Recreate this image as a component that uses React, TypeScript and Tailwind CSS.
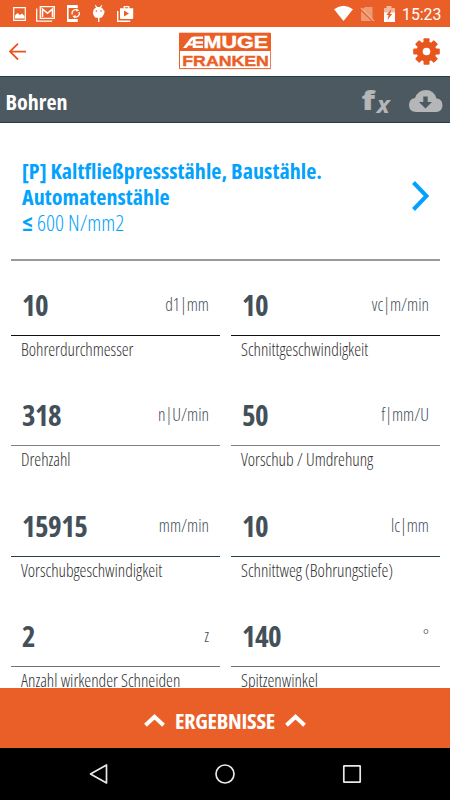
import React from "react";

const fields = [
  ["10", "d1|mm", "Bohrerdurchmesser", "border-[#101010]"],
  ["10", "vc|m/min", "Schnittgeschwindigkeit", "border-[#101010]"],
  ["318", "n|U/min", "Drehzahl", "border-[#7b8589]"],
  ["50", "f|mm/U", "Vorschub / Umdrehung", "border-[#7b8589]"],
  ["15915", "mm/min", "Vorschubgeschwindigkeit", "border-[#25404a]"],
  ["10", "lc|mm", "Schnittweg (Bohrungstiefe)", "border-[#25404a]"],
  ["2", "z", "Anzahl wirkender Schneiden", "border-[#69757a]"],
  ["140", "°", "Spitzenwinkel", "border-[#69757a]"],
];

function StatusBar() {
  return (
    <div className="flex h-[27px] shrink-0 items-center bg-[#e95f27] text-white">
      <svg width="150" height="27" viewBox="0 0 150 27" fill="none">
        <path d="M13.7 7.7h11.6v12.6H13.7z" stroke="#fff" strokeWidth="1.2" />
        <path d="M15 18.5v-3l2.5-2.5 2.5 2 2-1.5 2.5 2.5v2.5z" fill="#fff" />
        <path d="M36.7 8.5v12.6h15.5" stroke="#fff" strokeWidth="1.3" />
        <path d="M40.3 6.7h14v11.6h-14z" stroke="#fff" strokeWidth="1.3" />
        <path d="M42.5 17V9l5 4.3 5-4.3v8" stroke="#fff" strokeWidth="1.6" />
        <path d="M77 8V5.8H67.8v15.4H77V19" stroke="#fff" strokeWidth="1.6" />
        <path d="M67 5h10v3H67zM67 19h10v3H67z" fill="#fff" />
        <path d="M72.3 14.5a3.6 3.6 0 0 1 5.7-4M79 12a3.6 3.6 0 0 1-5.5 4.3" stroke="#fff" strokeWidth="1.2" />
        <path d="M76.5 8.3l2.7 2.5-3.2.8zM75 18.5l-2.5-2.6 3.3-.7z" fill="#fff" />
        <path d="M93.2 10.5Q94 8.5 96 7.6L94.8 5.3l.8-.4 1.8 2.2h2.4l1.8-2.2.8.4-1.2 2.3q2 .9 2.6 2.9h.7q.2 4.5-3.2 7.2h-5.8q-3.3-2.7-2.2-7.2z" fill="#fff" />
        <path d="M98 17h1.4v5H98z" fill="#fff" />
        <circle cx="96.4" cy="11" r=".8" fill="#e95f27" />
        <circle cx="101" cy="11" r=".8" fill="#e95f27" />
        <path d="M117.7 11v10.2h12.6" stroke="#fff" strokeWidth="1.4" />
        <path fillRule="evenodd" d="M120 8.3h3.5V7q0-1 1-1h4q1 0 1 1v1.3h3.7V18q0 1-1 1H121q-1 0-1-1zM124.8 8.3h3.4V7.2h-3.4zM124 10.5v6l5-3z" fill="#fff" />
      </svg>
      <svg className="ml-auto" width="66" height="27" viewBox="334 0 66 27" fill="none">
        <path d="M334 9.2q9.5-7 19 0L343.5 21z" fill="#fff" />
        <path d="M365 7h7.500v12L362 9.500zM361 11l10.500 10H361z" fill="#f09a75" />
        <path d="M361 8l13 13" stroke="#f4b092" strokeWidth="1.2" />
        <path d="M384 8h2.500V6h5v2h3.500v5h-11z" fill="#f6b79d" />
        <path d="M384 12.500h11V22h-11z" fill="#fff" />
        <path d="M391.500 9l-5.200 6h2.300l-1 5 4.500-6H390z" fill="#e95f27" />
      </svg>
      <div className="w-[50px] pt-[2px] pl-[2px] font-[Roboto,sans-serif] text-[15.8px] leading-none font-stretch-normal">15:23</div>
    </div>
  );
}

function Header() {
  return (
    <div className="flex h-[49px] shrink-0 items-center justify-between bg-white">
      <svg width="58" height="49" viewBox="0 27 58 49" fill="none" stroke="#e8561d" strokeWidth="1.8">
        <path d="M26 51.6H10M18 43.7l-8 7.9 8 7.9" />
      </svg>
      <svg className="ml-8" width="92" height="49" viewBox="179 27 92 49">
        <path d="M179.5 33.2h91.2v35.4h-91.2z" fill="#fff" stroke="#e95f27" strokeWidth="1" />
        <path d="M179 33h92v18h-92z" fill="#e95f27" />
        <path fillRule="evenodd" d="M183 48l6.8-9q1.9-2.4 4.5-2.4H203v2.5h-7.3v2.200H203v2.400h-7.300v1.900H203V48h-10.300v-2.500h-4.300L186.500 48zM190 43.400h2.700v-3.700z" fill="#fff" />
        <text x="203.5" y="47.9" textLength="64.5" lengthAdjust="spacingAndGlyphs" fontFamily="Liberation Sans, sans-serif" fontWeight="bold" fontSize="15.8" fill="#fff" stroke="#fff" strokeWidth=".4">MUGE</text>
        <text x="182.3" y="65.5" textLength="86.5" lengthAdjust="spacingAndGlyphs" fontFamily="Liberation Sans, sans-serif" fontWeight="bold" fontSize="14.8" fill="#e95f27" stroke="#e95f27" strokeWidth=".4">FRANKEN</text>
      </svg>
      <svg width="90" height="49" viewBox="360 27 90 49">
        <g transform="translate(426.5 51.5)" fill="#e8561d">
          {[0, 45, 90, 135].map((a) => (
            <rect key={a} x="-3" y="-13.3" width="6" height="26.6" rx="1" transform={`rotate(${a})`} />
          ))}
          <circle r="10" />
          <circle r="3.8" fill="#fff" />
        </g>
      </svg>
    </div>
  );
}

function TitleBar() {
  return (
    <div className="flex h-[47px] shrink-0 items-center justify-between border-y border-[#203f4a] bg-[#4c5960] pl-[5.5px]">
      <h1 className="pt-[3px] text-[22px] leading-none font-bold text-white">Bohren</h1>
      <svg className="font-stretch-normal" width="90" height="45" viewBox="360 77 90 45" fill="#b4b6b7">
        <text x="361.5" y="110" textLength="13.5" lengthAdjust="spacingAndGlyphs" fontFamily="Open Sans, sans-serif" fontWeight="800" fontSize="26.5">f</text>
        <text x="376.8" y="113" textLength="13" lengthAdjust="spacingAndGlyphs" fontFamily="Open Sans, sans-serif" fontWeight="700" fontStyle="italic" fontSize="24">x</text>
        <path d="M416 112q-7 0-7-7 0-6 6-7 3-8 11-8t10.500 8.500q6 .5 6 6.700t-6.500 6.800z" />
        <path d="M423.300 96.500h4.400v5.500h4.300l-6.500 6.500-6.500-6.500h4.300z" fill="#4c5960" />
      </svg>
    </div>
  );
}

function Chevron() {
  return (
    <svg width="21" height="14" viewBox="0 0 21 14" fill="none" stroke="#fff" strokeWidth="4">
      <path d="M1.5 11.2l9-8.4 9 8.4" />
    </svg>
  );
}

export default function App() {
  return (
    <div className="flex h-[800px] w-[450px] flex-col overflow-hidden bg-white font-['Open_Sans',sans-serif] font-stretch-[75%]">
      <StatusBar />
      <Header />
      <TitleBar />
      <main className="min-h-0 flex-1 overflow-hidden pr-[10px] pl-[11px]">
        <section className="flex h-[138px] items-center justify-between border-b-2 border-[#9a9a9a] pr-[11px] pl-[11px] text-[#03a2fd]">
          <div className="mt-[9px] text-[22px] leading-[26px]">
            <p className="font-bold tracking-[0.06px]">[P] Kaltfließpressstähle, Baustähle.</p>
            <p className="font-bold tracking-[0.06px]">Automatenstähle</p>
            <p className="font-light"><span className="mr-[0.5px] font-bold">≤</span> 600 N/mm2</p>
          </div>
          <svg className="mt-[10px]" width="17" height="30" viewBox="0 0 17 30" fill="none" stroke="#03a2fd" strokeWidth="4">
            <path d="M1.5 1.5l13 13.5-13 13.5" />
          </svg>
        </section>
        <div className="-mt-px grid grid-cols-2 gap-x-[11px]">
          {fields.map(([value, unit, label, line]) => (
            <div key={label} className="h-[110.4px]">
              <div className={`flex h-[76px] items-end justify-between border-b pr-[11px] pb-[9px] pl-[11px] ${line}`}>
                <b className="text-[29px] leading-[42px] tracking-[-0.55px] text-[#435059]">{value}</b>
                <span className="mb-[10px] text-[17.5px] leading-[24px] font-light text-[#435059]">{unit}</span>
              </div>
              <p className="pl-[10px] text-[17.4px] leading-[26.6px] font-light tracking-[-0.02px] whitespace-nowrap text-[#333]">{label}</p>
            </div>
          ))}
        </div>
      </main>
      <footer className="flex h-[60px] shrink-0 items-center justify-center gap-[10.5px] bg-[#e95f27] pt-[5px] text-[22px] font-bold text-white">
        <Chevron />
        <span className="tracking-[-0.25px]">ERGEBNISSE</span>
        <Chevron />
      </footer>
      <nav className="h-[52px] shrink-0 bg-black">
        <svg width="450" height="52" viewBox="0 748 450 52" fill="none" stroke="#e8e8e8" strokeWidth="1.7">
          <path d="M90.5 774l16-9v18z" strokeLinejoin="round" />
          <circle cx="225" cy="774" r="9" />
          <rect x="343.8" y="765.8" width="16.4" height="16.4" rx=".5" />
        </svg>
      </nav>
    </div>
  );
}
